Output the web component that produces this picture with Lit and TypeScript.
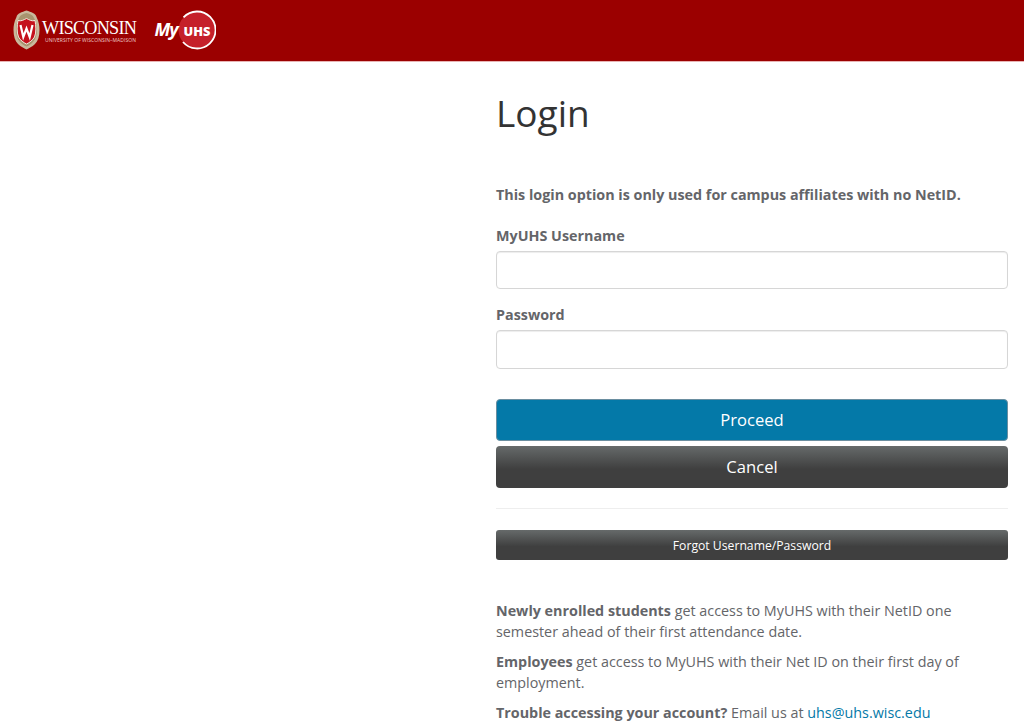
import { LitElement, html, css } from "lit";
import { customElement } from "lit/decorators.js";

@customElement("app-root")
export class AppRoot extends LitElement {
  static styles = css`
    :host { display: block; height: 723px; overflow: hidden; background: #fff; font-family: "Open Sans", sans-serif; color: #646569; font-size: 14.33px; line-height: 20.5px; }
    * { box-sizing: border-box; }
    header { height: 62px; background: #9b0000; border-bottom: 1px solid #e8b4b4; display: flex; align-items: center; padding: 0 0 1px 13px; }
    .crest { width: 27px; height: 40px; display: block; }
    .wordmark { display: flex; flex-direction: column; margin-left: 2px; width: 93px; color: #fff; }
    .wis { font: 18.2px/18px "Liberation Serif", serif; letter-spacing: -0.78px; margin-top: 2px; }
    .uw { font: 5px/6px "Open Sans", sans-serif; letter-spacing: 0.05px; margin-left: 3px; white-space: nowrap; color: #eec9c9; }
    .uhs { width: 62px; height: 40px; display: block; margin-left: 19px; }
    main { margin-left: 496px; width: 512px; }
    h1 { margin: 0; padding-top: 27px; font-size: 37px; font-weight: 400; line-height: 48px; color: #333; height: 122px; }
    .note { font-weight: 700; margin: 0; height: 39.5px; padding-top: 1px; }
    label { display: block; font-weight: 700; height: 27px; padding-top: 2px; }
    .field { height: 38.5px; border: 1px solid #d6d6d6; border-radius: 4px; background: #fff; box-shadow: inset 0 1px 1px rgba(0,0,0,.075); margin-bottom: 14px; }
    .field.last { height: 39px; margin-bottom: 30px; }
    .btn { display: flex; align-items: center; justify-content: center; width: 100%; height: 42px; padding: 0 0 2px; border-radius: 4px; color: #fff; font-size: 16.6px; margin-bottom: 5px; border: 0; font-family: inherit; }
    .primary { background: #0479a8; border: 1px solid #6a8ea0; }
    .dark { background: linear-gradient(#666a6a, #3f3f3f 55%, #3f3f3f); }
    hr { border: 0; border-top: 1px solid #eee; margin: 20px 0 21px; }
    .small { height: 30px; padding: 0; font-size: 12.2px; margin-bottom: 0; border-radius: 3px; }
    .info { margin-top: 41px; }
    .info p { margin: 0 0 10px; }
    .info a { color: #0479a8; text-decoration: none; }
  `;

  render() {
    return html`
      <header>
        <svg class="crest" viewBox="0 0 27 40">
          <path d="M13.5 0.5C9 2 4 3.5 3.5 7C1 12 0.5 16 0.5 20C0.5 26 2 31 5 34C8 37 11 38 13.5 39.5C16 38 19 37 22 34C25 31 26.5 26 26.5 20C26.5 16 26 12 23.5 7C23 3.5 18 2 13.5 0.5Z" fill="#c9b89c"/>
          <path d="M13.5 3C10 4 7 5 6 8C3.5 12 3 16 3 20C3 25 4.5 29.5 7 32C9 34 11 35.5 13.5 36.5C16 35.5 18 34 20 32C22.5 29.5 24 25 24 20C24 16 23.5 12 21 8C20 5 17 4 13.5 3Z" fill="#a8946f"/>
          <path d="M5 10.5C8 11.5 10.5 10 13.5 8.5C16.5 10 19 11.5 22 10.5C23 16 23.5 22 21.5 27C19.5 30.5 16.5 32.5 13.5 34C10.5 32.5 7.5 30.5 5.5 27C3.5 22 4 16 5 10.5Z" fill="#c5121d" stroke="#f3ece0" stroke-width="1"/>
          <path d="M7.5 15L10.3 27L13.5 18.5L16.7 27L19.5 15" fill="none" stroke="#fff" stroke-width="2.2"/>
        </svg>
        <div class="wordmark">
          <span class="wis">WISCONSIN</span>
          <span class="uw">UNIVERSITY OF WISCONSIN–MADISON</span>
        </div>
        <svg class="uhs" viewBox="0 0 62 40">
          <circle cx="43" cy="20" r="18.5" fill="#c5202a"/>
          <path d="M29.5 7.4A18.5 18.5 0 1 1 29 32" fill="none" stroke="#fff" stroke-width="1.8"/>
          <text x="0.5" y="26" font-family="Open Sans" font-size="18" font-weight="700" font-style="italic" fill="#fff" letter-spacing="-1.2">My</text>
          <text x="29.5" y="25.5" font-family="Open Sans" font-size="12.8" font-weight="800" fill="#fff">UHS</text>
        </svg>
      </header>
      <main>
        <h1>Login</h1>
        <p class="note">This login option is only used for campus affiliates with no NetID.</p>
        <label>MyUHS Username</label>
        <div class="field"></div>
        <label>Password</label>
        <div class="field last"></div>
        <button class="btn primary">Proceed</button>
        <button class="btn dark">Cancel</button>
        <hr />
        <button class="btn dark small">Forgot Username/Password</button>
        <div class="info">
          <p><b>Newly enrolled students</b> get access to MyUHS with their NetID one semester ahead of their first attendance date.</p>
          <p><b>Employees</b> get access to MyUHS with their Net ID on their first day of employment.</p>
          <p><b>Trouble accessing your account?</b> Email us at <a href="#">uhs@uhs.wisc.edu</a></p>
        </div>
      </main>
    `;
  }
}
